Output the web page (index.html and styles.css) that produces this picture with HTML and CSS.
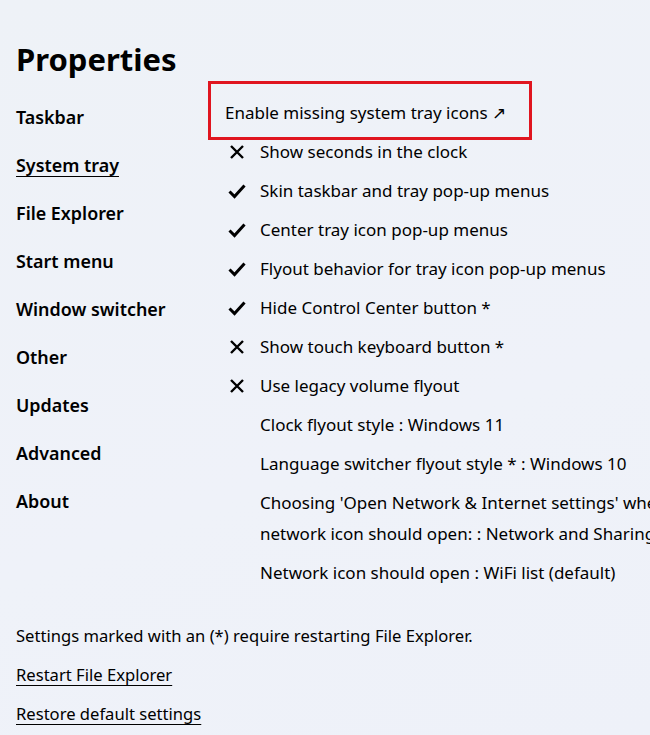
FILE: index.html
```html
<!DOCTYPE html>
<html>
<head>
<meta charset="utf-8">
<title>Properties</title>
<link rel="stylesheet" href="styles.css">
</head>
<body>
<div class="page">
  <h1 class="title">Properties</h1>
  <div class="main">
    <nav class="sidebar">
      <div class="nav-item">Taskbar</div>
      <div class="nav-item active">System tray</div>
      <div class="nav-item">File Explorer</div>
      <div class="nav-item">Start menu</div>
      <div class="nav-item">Window switcher</div>
      <div class="nav-item">Other</div>
      <div class="nav-item">Updates</div>
      <div class="nav-item">Advanced</div>
      <div class="nav-item">About</div>
    </nav>
    <section class="content">
      <div class="highlight">Enable missing system tray icons ↗</div>
      <ul class="options">
        <li class="option"><span class="icon"><svg viewBox="0 0 18 18"><path d="M3 3 L15 15 M15 3 L3 15" stroke="#000" stroke-width="2.4" fill="none"/></svg></span><span class="label">Show seconds in the clock</span></li>
        <li class="option"><span class="icon"><svg viewBox="0 0 18 18"><path d="M1.5 9.5 L6.5 14.5 L16.5 3.5" stroke="#000" stroke-width="3" fill="none" stroke-linejoin="miter"/></svg></span><span class="label">Skin taskbar and tray pop-up menus</span></li>
        <li class="option"><span class="icon"><svg viewBox="0 0 18 18"><path d="M1.5 9.5 L6.5 14.5 L16.5 3.5" stroke="#000" stroke-width="3" fill="none"/></svg></span><span class="label">Center tray icon pop-up menus</span></li>
        <li class="option"><span class="icon"><svg viewBox="0 0 18 18"><path d="M1.5 9.5 L6.5 14.5 L16.5 3.5" stroke="#000" stroke-width="3" fill="none"/></svg></span><span class="label">Flyout behavior for tray icon pop-up menus</span></li>
        <li class="option"><span class="icon"><svg viewBox="0 0 18 18"><path d="M1.5 9.5 L6.5 14.5 L16.5 3.5" stroke="#000" stroke-width="3" fill="none"/></svg></span><span class="label">Hide Control Center button *</span></li>
        <li class="option"><span class="icon"><svg viewBox="0 0 18 18"><path d="M3 3 L15 15 M15 3 L3 15" stroke="#000" stroke-width="2.4" fill="none"/></svg></span><span class="label">Show touch keyboard button *</span></li>
        <li class="option"><span class="icon"><svg viewBox="0 0 18 18"><path d="M3 3 L15 15 M15 3 L3 15" stroke="#000" stroke-width="2.4" fill="none"/></svg></span><span class="label">Use legacy volume flyout</span></li>
        <li class="option"><span class="icon"></span><span class="label">Clock flyout style : Windows 11</span></li>
        <li class="option"><span class="icon"></span><span class="label">Language switcher flyout style * : Windows 10</span></li>
        <li class="option"><span class="icon"></span><span class="label">Choosing 'Open Network &amp; Internet settings' when clicking the<br>network icon should open: : Network and Sharing Center</span></li>
        <li class="option"><span class="icon"></span><span class="label">Network icon should open : WiFi list (default)</span></li>
      </ul>
    </section>
  </div>
  <footer class="footer">
    <div class="note">Settings marked with an (*) require restarting File Explorer.</div>
    <div class="link">Restart File Explorer</div>
    <div class="link">Restore default settings</div>
  </footer>
</div>
</body>
</html>
```

FILE: styles.css
```css
html, body {
  margin: 0;
  padding: 0;
  width: 650px;
  height: 735px;
  overflow: hidden;
}
body {
  background: linear-gradient(160deg, #eef2f7 0%, #eff2f9 60%, #eef1f9 100%);
  font-family: "Noto Sans", "Segoe UI", sans-serif;
  color: #000;
}
.page {
  padding: 0 0 0 16px;
}
.title {
  margin: 0;
  padding-top: 38px;
  font-size: 31px;
  line-height: 42px;
  font-weight: 700;
  height: 43px;
}
.main {
  display: grid;
  grid-template-columns: 192px 560px;
  width: 752px;
}
.sidebar {
  padding-top: 12px;
}
.nav-item {
  font-size: 17.9px;
  font-weight: 600;
  line-height: 48px;
  height: 48px;
}
.nav-item.active {
  text-decoration: underline;
  text-underline-offset: 4px;
}
.content {
  font-size: 17px;
}
.highlight {
  width: 290px;
  border: 3px solid #e0151f;
  padding: 17px 14px 12px 14px;
  line-height: 24px;
  white-space: nowrap;
}
.options {
  list-style: none;
  margin: -8px 0 0 0;
  padding: 0;
}
.option {
  display: flex;
  align-items: flex-start;
  padding: 4px 0;
  line-height: 31px;
  white-space: nowrap;
}
.icon {
  width: 52px;
  height: 31px;
  display: flex;
  align-items: center;
  padding-left: 20px;
  box-sizing: border-box;
}
.icon svg {
  width: 18px;
  height: 18px;
}
.footer {
  margin-top: 24px;
  font-size: 16.6px;
}
.note, .link {
  line-height: 31px;
  padding: 4px 0;
}
.link {
  text-decoration: underline;
  text-underline-offset: 4px;
}
```
